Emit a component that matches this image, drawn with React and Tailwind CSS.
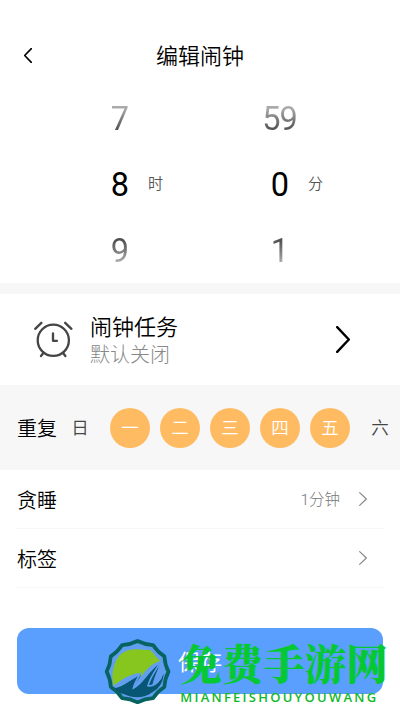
import React, { useState } from "react";

const DAYS = ["日", "一", "二", "三", "四", "五", "六"];

const Arrow = ({ className, width }) => (
    <svg
        className={className}
        viewBox="0 0 12 24"
        fill="none"
        stroke="currentColor"
        strokeWidth={width}
        strokeLinecap="round"
        strokeLinejoin="round"
        preserveAspectRatio="none"
    >
        <path d="M1 1L11 12L1 23" vectorEffect="non-scaling-stroke" />
    </svg>
);

const AlarmIcon = () => (
    <svg
        className="w-10 h-10 shrink-0"
        viewBox="0 0 40 40"
        fill="none"
        stroke="#454545"
        strokeWidth="2.3"
        strokeLinecap="round"
        strokeLinejoin="round"
    >
        <circle cx="20.3" cy="20.3" r="15.6" />
        <path d="M20 13.500V20.800H24" />
        <path d="M2.200 8.800L8.400 2.800M32.200 2.800L38.400 8.800" />
        <path d="M10 33.500L8 36M30.400 33.500L32.400 36" />
    </svg>
);

// Cột chọn giờ / phút
const PickerColumn = ({ values, unit }) => (
    <div className="relative flex w-20 flex-col text-center font-[Roboto,'Liberation_Sans',sans-serif] text-[32.500px] leading-[66px] tracking-[-1px]">
        <span className="bg-linear-to-b from-[#aaa] from-35% to-[#484848] to-70% bg-clip-text pr-px text-transparent">
            {values[0]}
        </span>
        <span className="pr-px text-black">{values[1]}</span>
        <span className="bg-linear-to-b from-[#484848] from-30% to-[#b5b5b5] to-70% bg-clip-text pr-px text-transparent">
            {values[2]}
        </span>
        <span className="absolute left-[68px] top-[64px] font-['Noto_Sans_CJK_SC',sans-serif] text-[15px] font-[350] tracking-normal text-[#555]">
            {unit}
        </span>
    </div>
);

const SettingRow = ({ label, value }) => (
    <div className="mx-[17px] flex h-[59px] items-center border-b border-[#f7f7f7] pr-[16px]">
        <span className="flex-1 pt-px text-[20px] font-[350] text-black">
            {label}
        </span>
        <span className="mr-[19px] pt-[3px] font-[Roboto,'Noto_Sans_CJK_SC',sans-serif] text-[15.500px] font-light text-[#777]">
            {value}
        </span>
        <Arrow className="h-[14px] w-[8px] text-[#888]" width="1.2" />
    </div>
);

const Watermark = () => (
    <div className="pointer-events-none absolute left-[104px] top-[637px] flex">
        <svg
            className="mt-[2px] h-[65.300px] w-[67.200px] shrink-0"
            viewBox="20 15 200 196"
            preserveAspectRatio="none"
        >
            <path
                d="M212 113Q201 91 199.700 67Q179 54 166 33.300Q142 32 120 21Q98 32 74 33.300Q61 54 40.300 67Q39 91 28 113Q39 135 40.300 159Q61 172 74 192.700Q98 194 120 205Q142 194 166 192.700Q179 172 199.700 159Q201 135 212 113Z"
                fill="#629ef0"
                stroke="#07635f"
                strokeWidth="11"
                strokeLinejoin="round"
            />
            <path
                d="M47 147C41 119 50 83 67 63C83 46 112 43 140 47L159 49L174 67L188 82C164 87 147 105 131 128C129 112 115 117 97 125C76 132 63 146 47 155Z"
                fill="#86c61f"
            />
            <path
                d="M51 163C84 157 95 136 130 123C122 142 109 149 105 165C137 153 150 110 187 87C180 110 167 132 164 155C177 155 187 140 198 119C195 148 184 163 164 175C139 194 107 194 80 181C66 178 58 170 51 163Z"
                fill="#075674"
            />
            <path
                d="M54 158C83 151 94 137 128 119C119 136 111 147 108 162C137 147 151 109 186 84M186 88C174 109 157 131 151 155C168 160 181 144 191 130"
                fill="none"
                stroke="#629ef0"
                strokeWidth="5"
            />
        </svg>
        <div className="ml-[9px] whitespace-nowrap">
            <p className="font-['Noto_Serif_CJK_SC','Noto_Sans_CJK_SC',serif] text-[41.500px] font-black leading-[51px] text-[#05c832]">
                免费手游网
            </p>
            <p className="mt-[2px] font-['Open_Sans',sans-serif] text-[13px] font-semibold leading-[14px] tracking-[2.250px] text-[#12b82a]">
                MIANFEISHOUYOUWANG
            </p>
        </div>
    </div>
);

const App = () => {
    const [selected, setSelected] = useState([1, 2, 3, 4, 5]);

    // Bật / tắt ngày lặp lại
    const toggleDay = (index) => {
        setSelected(
            selected.includes(index)
                ? selected.filter((day) => day !== index)
                : [...selected, index]
        );
    };

    return (
        <div className="relative h-[711px] w-[400px] overflow-hidden bg-white font-['Noto_Sans_CJK_SC',sans-serif]">
            <header className="grid h-[85px] grid-cols-3 items-center px-6 pt-[26px]">
                <button>
                    <Arrow
                        className="h-[15px] w-[8px] rotate-180 text-black"
                        width="1.6"
                    />
                </button>
                <h1 className="pb-[2px] text-center text-[22px] font-[350] text-black">
                    编辑闹钟
                </h1>
            </header>

            <section className="flex h-[198px] gap-20 pl-20 pt-px">
                <PickerColumn values={["7", "8", "9"]} unit="时" />
                <PickerColumn values={["59", "0", "1"]} unit="分" />
            </section>

            <section className="flex h-[102px] items-center border-t-[11px] border-[#f7f7f7] pl-[33px] pr-[50px]">
                <AlarmIcon />
                <div className="ml-[17px] flex-1 pt-px">
                    <p className="text-[22px] font-[350] leading-[27px] text-black">
                        闹钟任务
                    </p>
                    <p className="text-[20px] font-light leading-[30px] text-[#888]">
                        默认关闭
                    </p>
                </div>
                <Arrow className="h-[27px] w-[14px] text-black" width="2.4" />
            </section>

            <section className="flex h-[85px] items-center bg-[#f7f7f7] pl-[17px]">
                <span className="w-[43px] shrink-0 text-[20px] font-[350] text-black">
                    重复
                </span>
                <div className="flex gap-[10px]">
                    {DAYS.map((day, index) => (
                        <button
                            key={day}
                            onClick={() => toggleDay(index)}
                            className={
                                selected.includes(index)
                                    ? "h-10 w-10 rounded-full bg-[#ffbb62] text-[17.500px] font-[350] text-white"
                                    : "h-10 w-10 rounded-full text-[17.500px] font-[350] text-[#444]"
                            }
                        >
                            {day}
                        </button>
                    ))}
                </div>
            </section>

            <SettingRow label="贪睡" value="1分钟" />
            <SettingRow label="标签" />

            <button className="mx-[17px] mt-[40px] h-[66px] w-[366px] rounded-xl bg-[#5a9efe] pb-[2px] text-[22px] text-white">
                保存
            </button>

            <Watermark />
        </div>
    );
};

export default App;
